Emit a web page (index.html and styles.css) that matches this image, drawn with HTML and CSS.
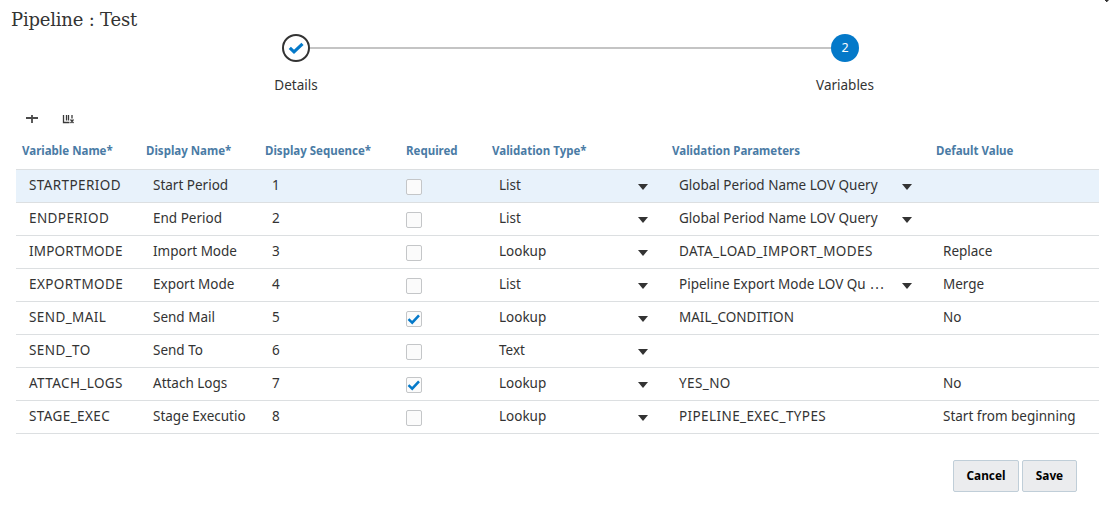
FILE: index.html
```html
<!DOCTYPE html>
<html lang="en">
<head>
    <meta charset="UTF-8">
    <meta name="viewport" content="width=device-width, initial-scale=1.0">
    <title>Pipeline : Test</title>
    <link rel="stylesheet" href="styles.css">
</head>
<body>
    <div class="page">
        <svg class="corner-mark" width="4" height="2" viewBox="0 0 4 2"><path d="M0 0h3.500v1H2.500v1H1V1H0z" fill="#333"/></svg>
        <h1 class="page-title">Pipeline : Test</h1>

        <div class="train">
            <div class="step">
                <div class="step-circle done">
                    <svg width="16" height="14" viewBox="0 0 16 14"><path d="M1.800 6.800L6 10.800L14.500 2.800" fill="none" stroke="#0479c9" stroke-width="3.200"/></svg>
                </div>
                <span class="step-label">Details</span>
            </div>
            <div class="connector"></div>
            <div class="step">
                <div class="step-circle current">2</div>
                <span class="step-label">Variables</span>
            </div>
        </div>

        <div class="toolbar">
            <svg width="12" height="10" viewBox="0 0 12 10"><path d="M0 4h12M6 1v8" fill="none" stroke="#4a4a4a" stroke-width="1.800"/></svg>
            <svg width="12" height="10" viewBox="0 0 12 10"><path d="M1.500 1v7.500h6M4.500 1v5.500M6.500 1v5.500M10 1v3.500M8.500 5.500l3 3.500M11.500 5.500l-3 3.500" fill="none" stroke="#3a3a3a" stroke-width="1.300"/></svg>
        </div>

        <table class="variables">
            <colgroup>
                <col class="col-name"><col class="col-display"><col class="col-seq"><col class="col-req"><col class="col-type"><col class="col-params"><col class="col-default">
            </colgroup>
            <thead>
                <tr>
                    <th>Variable Name*</th>
                    <th>Display Name*</th>
                    <th>Display Sequence*</th>
                    <th>Required</th>
                    <th>Validation Type*</th>
                    <th>Validation Parameters</th>
                    <th>Default Value</th>
                </tr>
            </thead>
            <tbody>
                <tr class="selected">
                    <td class="code">STARTPERIOD</td>
                    <td>Start Period</td>
                    <td>1</td>
                    <td class="check"><span class="box"></span></td>
                    <td><div class="select">List<i class="arrow"></i></div></td>
                    <td><div class="select params">Global Period Name LOV Query<i class="arrow"></i></div></td>
                    <td></td>
                </tr>
                <tr>
                    <td class="code">ENDPERIOD</td>
                    <td>End Period</td>
                    <td>2</td>
                    <td class="check"><span class="box"></span></td>
                    <td><div class="select">List<i class="arrow"></i></div></td>
                    <td><div class="select params">Global Period Name LOV Query<i class="arrow"></i></div></td>
                    <td></td>
                </tr>
                <tr>
                    <td class="code tight">IMPORTMODE</td>
                    <td>Import Mode</td>
                    <td>3</td>
                    <td class="check"><span class="box"></span></td>
                    <td><div class="select">Lookup<i class="arrow"></i></div></td>
                    <td class="code">DATA_LOAD_IMPORT_MODES</td>
                    <td>Replace</td>
                </tr>
                <tr>
                    <td class="code">EXPORTMODE</td>
                    <td>Export Mode</td>
                    <td>4</td>
                    <td class="check"><span class="box"></span></td>
                    <td><div class="select">List<i class="arrow"></i></div></td>
                    <td><div class="select params"><span>Pipeline Export Mode LOV Qu <span class="dots">...</span></span><i class="arrow"></i></div></td>
                    <td>Merge</td>
                </tr>
                <tr>
                    <td class="code">SEND_MAIL</td>
                    <td>Send Mail</td>
                    <td>5</td>
                    <td class="check"><span class="box"><svg width="14" height="14" viewBox="0 0 14 14"><path d="M1.500 7.200L5.200 10.700L12 3.300" fill="none" stroke="#0479c9" stroke-width="2.500"/></svg></span></td>
                    <td><div class="select">Lookup<i class="arrow"></i></div></td>
                    <td>MAIL_CONDITION</td>
                    <td>No</td>
                </tr>
                <tr>
                    <td class="code">SEND_TO</td>
                    <td>Send To</td>
                    <td>6</td>
                    <td class="check"><span class="box"></span></td>
                    <td><div class="select">Text<i class="arrow"></i></div></td>
                    <td></td>
                    <td></td>
                </tr>
                <tr>
                    <td class="code">ATTACH_LOGS</td>
                    <td>Attach Logs</td>
                    <td>7</td>
                    <td class="check"><span class="box"><svg width="14" height="14" viewBox="0 0 14 14"><path d="M1.500 7.200L5.200 10.700L12 3.300" fill="none" stroke="#0479c9" stroke-width="2.500"/></svg></span></td>
                    <td><div class="select">Lookup<i class="arrow"></i></div></td>
                    <td class="code">YES_NO</td>
                    <td>No</td>
                </tr>
                <tr>
                    <td class="code">STAGE_EXEC</td>
                    <td>Stage Executio</td>
                    <td>8</td>
                    <td class="check"><span class="box"></span></td>
                    <td><div class="select">Lookup<i class="arrow"></i></div></td>
                    <td class="code">PIPELINE_EXEC_TYPES</td>
                    <td>Start from beginning</td>
                </tr>
            </tbody>
        </table>

        <div class="actions">
            <button class="btn cancel">Cancel</button>
            <button class="btn save">Save</button>
        </div>
    </div>
</body>
</html>
```

FILE: styles.css
```css
* {
    box-sizing: border-box;
}
body {
    margin: 0;
    background-color: #ffffff;
    font-family: "Noto Sans", "Open Sans", sans-serif;
    font-size: 13.5px;
    color: #333333;
}
.page {
    position: relative;
    height: 507px;
    overflow: hidden;
}
.corner-mark {
    position: absolute;
    top: 0;
    right: 0;
}
.page-title {
    margin: 0;
    padding: 8px 0 0 11px;
    height: 34px;
    font-family: "DejaVu Serif", serif;
    font-size: 18px;
    font-weight: normal;
    line-height: 24px;
    letter-spacing: -0.2px;
}
.train {
    display: flex;
    align-items: flex-start;
    padding-left: 282px;
    height: 78px;
}
.step {
    display: flex;
    flex-direction: column;
    align-items: center;
    width: 28px;
}
.step-circle {
    display: flex;
    align-items: center;
    justify-content: center;
    width: 28px;
    height: 28px;
    border-radius: 50%;
    line-height: 18px;
}
.done {
    border: 2px solid #333333;
}
.current {
    background-color: #0479c9;
    color: #ffffff;
    font-size: 12.5px;
}
.step-label {
    margin-top: 13px;
    line-height: 20px;
}
.connector {
    width: 521px;
    height: 2px;
    margin-top: 13px;
    background-color: #c4c4c4;
}
.toolbar {
    display: flex;
    gap: 24px;
    padding: 2px 0 0 26px;
    height: 21px;
}
.variables {
    width: 1083px;
    margin-left: 16px;
    border-collapse: separate;
    border-spacing: 0;
    table-layout: fixed;
}
.col-name { width: 124px; }
.col-display { width: 119px; }
.col-seq { width: 141px; }
.col-req { width: 86px; }
.col-type { width: 180px; }
.col-params { width: 264px; }
.col-default { width: 169px; }
.variables th {
    height: 37px;
    padding: 0 0 2px 6px;
    border-bottom: 1px solid #dcdfe1;
    color: #4a7ba5;
    font-size: 11.5px;
    text-align: left;
    white-space: nowrap;
}
.variables td {
    height: 33px;
    padding: 0 0 2px 13px;
    border-bottom: 1px solid #dcdfe1;
    line-height: 20px;
    white-space: nowrap;
}
.variables .selected td {
    background-color: #e8f2fb;
}
.variables .code {
    letter-spacing: 0.4px;
}
.variables .tight {
    letter-spacing: 0.2px;
}
.variables .check {
    padding: 2px 0 0 6px;
}
.box {
    display: block;
    width: 16px;
    height: 16px;
    border: 1px solid #c4c6c8;
    border-radius: 2px;
    background-color: #fbfbfb;
}
.box svg {
    display: block;
}
.select {
    display: flex;
    align-items: center;
    justify-content: space-between;
    width: 149px;
}
.params {
    width: 233px;
}
.dots {
    margin-left: 1px;
    letter-spacing: 1.4px;
}
.arrow {
    margin-top: 3px;
    border-top: 6px solid #333333;
    border-left: 5px solid transparent;
    border-right: 5px solid transparent;
}
.actions {
    display: flex;
    justify-content: flex-end;
    gap: 3px;
    padding: 26px 32px 0 0;
}
.btn {
    height: 32px;
    padding: 0 0 2px;
    border: 1px solid #c0ced8;
    border-radius: 2px;
    background-color: #ebecee;
    color: #000000;
    font-family: inherit;
    font-size: 11.8px;
    font-weight: bold;
}
.cancel {
    width: 66px;
}
.save {
    width: 55px;
}
```
